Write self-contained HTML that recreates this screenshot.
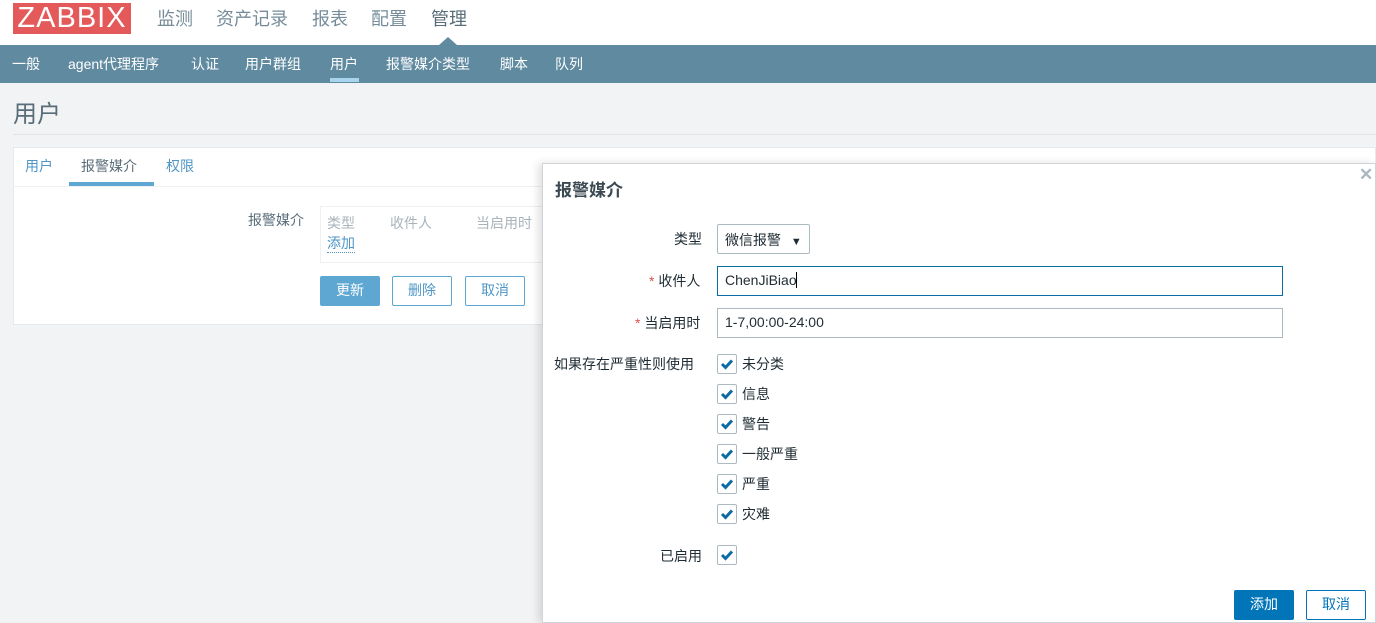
<!DOCTYPE html>
<html><head><meta charset="utf-8"><style>
*{box-sizing:border-box;margin:0;padding:0}
body{width:1376px;height:623px;overflow:hidden;background:#f2f3f5;font-family:"Liberation Sans","Noto Sans CJK SC",sans-serif;font-size:14px;color:#1f2c33;position:relative}
.abs{position:absolute}
.hdr{left:0;top:0;width:1376px;height:45px;background:#fff}
.logo{left:13px;top:3px;width:118px;height:31px;background:#e45959;color:#fff;font-size:29px;line-height:31px;text-align:center;letter-spacing:1px}
.top a{position:absolute;top:5px;font-size:18px;color:#768d99}
.nav{left:0;top:45px;width:1376px;height:38px;background:#5f8aa0}
.nav span{position:absolute;top:9px;color:#fff;font-size:14px}
.cb{position:absolute;left:717px;width:20px;height:20px;border:1px solid #acbbc2;border-radius:2px;background:#fff}
.cb svg{position:absolute;left:2px;top:3px}
.lbl{position:absolute;font-size:14px;margin-top:-2px}
.btn{position:absolute;height:30px;border-radius:2px;font-size:14px;text-align:center;line-height:27px}
</style></head><body>
<div class="abs hdr"></div>
<div class="abs logo">ZABBIX</div>
<div class="top"><a style="left:157px">监测</a><a style="left:216px">资产记录</a><a style="left:312px">报表</a><a style="left:371px">配置</a><a style="left:431px;color:#596d79">管理</a></div>
<div class="abs" style="left:439px;top:37px;width:0;height:0;border-left:9px solid transparent;border-right:9px solid transparent;border-bottom:8px solid #5f8aa0"></div>
<div class="abs nav">
<span style="left:12px">一般</span><span style="left:68px">agent代理程序</span><span style="left:191px">认证</span><span style="left:245px">用户群组</span><span style="left:330px">用户</span><span style="left:386px">报警媒介类型</span><span style="left:500px">脚本</span><span style="left:555px">队列</span>
<div class="abs" style="left:330px;top:33px;width:29px;height:4px;background:#a9d4ee"></div>
</div>
<div class="abs" style="left:13px;top:94px;font-size:24px;color:#596d79">用户</div>
<div class="abs" style="left:13px;top:134px;width:1363px;height:1px;background:#e0e4e6"></div>
<div class="abs" style="left:13px;top:147px;width:1363px;height:178px;background:#fff;border:1px solid #e6e9eb"></div>
<div class="abs" style="left:13px;top:186px;width:1363px;height:1px;background:#eef0f1"></div>
<div class="lbl" style="left:25px;top:158px;color:#4f96c7">用户</div>
<div class="lbl" style="left:81px;top:158px;color:#596d79">报警媒介</div>
<div class="abs" style="left:69px;top:182px;width:85px;height:4px;background:#5ea7d3"></div>
<div class="lbl" style="left:166px;top:158px;color:#4f96c7">权限</div>
<div class="lbl" style="left:248px;top:212px;color:#596d79">报警媒介</div>
<div class="abs" style="left:320px;top:206px;width:240px;height:57px;border:1px solid #eef0f1"></div>
<div class="lbl" style="left:327px;top:215px;color:#a8b3ba">类型</div>
<div class="lbl" style="left:390px;top:215px;color:#a8b3ba">收件人</div>
<div class="lbl" style="left:476px;top:215px;color:#a8b3ba">当启用时</div>
<div class="lbl" style="left:327px;top:237px;color:#4f96c7;border-bottom:1px dotted #4f96c7;line-height:17px">添加</div>
<div class="btn" style="left:320px;top:276px;width:60px;background:#5ea7d3;color:#fff;border:1px solid #5ea7d3">更新</div>
<div class="btn" style="left:392px;top:276px;width:60px;border:1px solid #5ea7d3;color:#4f96c7;background:#fff">删除</div>
<div class="btn" style="left:465px;top:276px;width:60px;border:1px solid #5ea7d3;color:#4f96c7;background:#fff">取消</div>

<div class="abs" style="left:542px;top:163px;width:834px;height:460px;background:#fff;border:1px solid #cfd5d8;box-shadow:-4px 0 8px rgba(0,0,0,0.12)"></div>
<div class="abs" style="left:1359px;top:165px;color:#aab8c0;font-size:17px;font-weight:bold">✕</div>
<div class="abs" style="left:555px;top:176px;font-size:17px;font-weight:bold;color:#3b4a52">报警媒介</div>
<div class="lbl" style="left:674px;top:231px">类型</div>
<div class="abs" style="left:717px;top:224px;width:93px;height:30px;border:1px solid #acbbc2;border-radius:2px;padding:5px 0 0 7px">微信报警 <span style="font-size:11px;margin-left:6px">▼</span></div>
<div class="lbl" style="left:649px;top:273px"><span style="color:#d9534f">*</span> 收件人</div>
<div class="abs" style="left:717px;top:266px;width:566px;height:30px;border:1px solid #0b6ca3;padding:5px 0 0 7px">ChenJiBiao<span style="border-left:1px solid #000;margin-left:-1px"></span></div>
<div class="lbl" style="left:635px;top:315px"><span style="color:#d9534f">*</span> 当启用时</div>
<div class="abs" style="left:717px;top:308px;width:566px;height:30px;border:1px solid #acbbc2;padding:5px 0 0 7px">1-7,00:00-24:00</div>
<div class="lbl" style="left:554px;top:356px">如果存在严重性则使用</div>

<div class="cb" style="top:354px"><svg width="14" height="12" viewBox="0 0 14 12"><path d="M2 6 L5.5 9.5 L12 2.5" stroke="#0b6ca3" stroke-width="3" fill="none"/></svg></div><div class="lbl" style="left:742px;top:356px">未分类</div>
<div class="cb" style="top:384px"><svg width="14" height="12" viewBox="0 0 14 12"><path d="M2 6 L5.5 9.5 L12 2.5" stroke="#0b6ca3" stroke-width="3" fill="none"/></svg></div><div class="lbl" style="left:742px;top:386px">信息</div>
<div class="cb" style="top:414px"><svg width="14" height="12" viewBox="0 0 14 12"><path d="M2 6 L5.5 9.5 L12 2.5" stroke="#0b6ca3" stroke-width="3" fill="none"/></svg></div><div class="lbl" style="left:742px;top:416px">警告</div>
<div class="cb" style="top:444px"><svg width="14" height="12" viewBox="0 0 14 12"><path d="M2 6 L5.5 9.5 L12 2.5" stroke="#0b6ca3" stroke-width="3" fill="none"/></svg></div><div class="lbl" style="left:742px;top:446px">一般严重</div>
<div class="cb" style="top:474px"><svg width="14" height="12" viewBox="0 0 14 12"><path d="M2 6 L5.5 9.5 L12 2.5" stroke="#0b6ca3" stroke-width="3" fill="none"/></svg></div><div class="lbl" style="left:742px;top:476px">严重</div>
<div class="cb" style="top:504px"><svg width="14" height="12" viewBox="0 0 14 12"><path d="M2 6 L5.5 9.5 L12 2.5" stroke="#0b6ca3" stroke-width="3" fill="none"/></svg></div><div class="lbl" style="left:742px;top:506px">灾难</div>
<div class="lbl" style="left:660px;top:548px">已启用</div>
<div class="cb" style="top:545px"><svg width="14" height="12" viewBox="0 0 14 12"><path d="M2 6 L5.5 9.5 L12 2.5" stroke="#0b6ca3" stroke-width="3" fill="none"/></svg></div>

<div class="btn" style="left:1234px;top:590px;width:60px;background:#0275b8;color:#fff;border:1px solid #0275b8">添加</div>
<div class="btn" style="left:1306px;top:590px;width:60px;border:1px solid #0275b8;color:#0275b8;background:#fff">取消</div>
</body></html>
